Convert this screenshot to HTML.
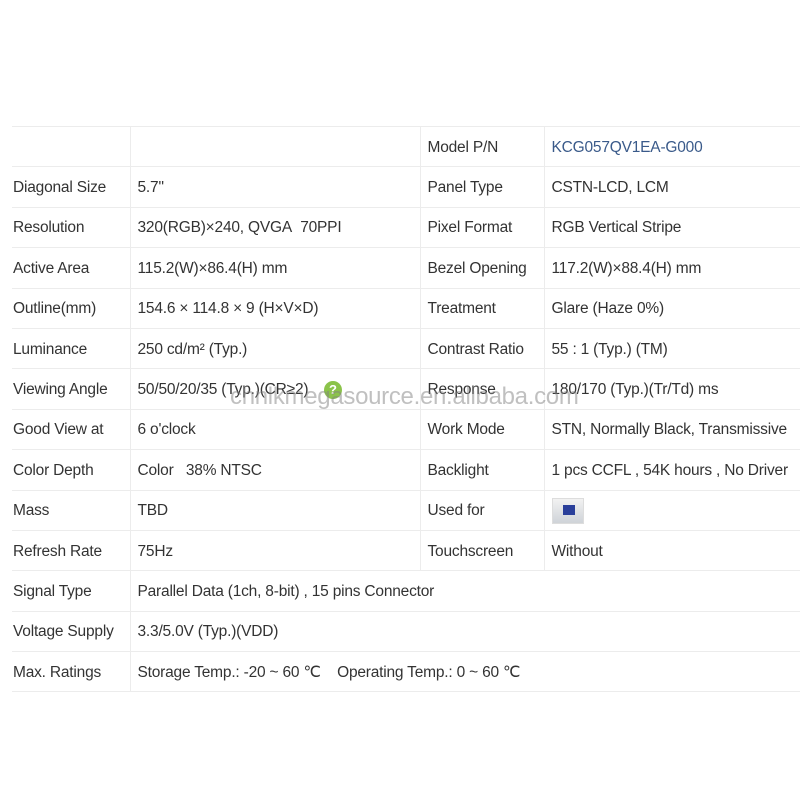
<!DOCTYPE html>
<html><head><style>
body{margin:0;background:#fff;width:800px;height:800px;overflow:hidden;position:relative;font-family:"Liberation Sans",sans-serif;}
table{position:absolute;left:12px;top:126px;border-collapse:collapse;width:788px;}
td{height:37.4px;border-top:1px solid #ececec;border-left:1px solid #ececec;padding:2px 0 0 7px;font-size:15.5px;color:#333;white-space:nowrap;letter-spacing:-0.2px;vertical-align:middle;}
td:first-child{border-left:none;padding-left:1px;}
tr:last-child td{border-bottom:1px solid #ececec;}
.b{color:#3a5a8a;}
.wm{position:absolute;left:230px;top:383px;font-size:24px;color:rgba(130,130,130,0.5);letter-spacing:-0.3px;}
.q{position:absolute;left:324px;top:381px;width:18px;height:18px;border-radius:50%;background:#8bc34a;color:#fff;font-size:13px;text-align:center;line-height:18px;font-weight:bold;}
.img{display:inline-block;width:30px;height:24px;background:linear-gradient(#f2f2f2,#cfd3d8);border:1px solid #ddd;vertical-align:middle;position:relative;}
.img:after{content:"";position:absolute;left:10px;top:6px;width:12px;height:10px;background:#2a3f9a;}
</style></head><body>
<table>
<colgroup><col style="width:118px"><col style="width:290px"><col style="width:124px"><col></colgroup>
<tr><td></td><td></td><td>Model P/N</td><td class="b">KCG057QV1EA-G000</td></tr>
<tr><td>Diagonal Size</td><td>5.7"</td><td>Panel Type</td><td>CSTN-LCD, LCM</td></tr>
<tr><td>Resolution</td><td>320(RGB)×240, QVGA&nbsp; 70PPI</td><td>Pixel Format</td><td>RGB Vertical Stripe</td></tr>
<tr><td>Active Area</td><td>115.2(W)×86.4(H) mm</td><td>Bezel Opening</td><td>117.2(W)×88.4(H) mm</td></tr>
<tr><td>Outline(mm)</td><td>154.6 × 114.8 × 9 (H×V×D)</td><td>Treatment</td><td>Glare (Haze 0%)</td></tr>
<tr><td>Luminance</td><td>250 cd/m² (Typ.)</td><td>Contrast Ratio</td><td>55 : 1 (Typ.) (TM)</td></tr>
<tr><td>Viewing Angle</td><td>50/50/20/35 (Typ.)(CR≥2)</td><td>Response</td><td>180/170 (Typ.)(Tr/Td) ms</td></tr>
<tr><td>Good View at</td><td>6 o'clock</td><td>Work Mode</td><td>STN, Normally Black, Transmissive</td></tr>
<tr><td>Color Depth</td><td>Color&nbsp;&nbsp; 38% NTSC</td><td>Backlight</td><td>1 pcs CCFL , 54K hours , No Driver</td></tr>
<tr><td>Mass</td><td>TBD</td><td>Used for</td><td><span class="img"></span></td></tr>
<tr><td>Refresh Rate</td><td>75Hz</td><td>Touchscreen</td><td>Without</td></tr>
<tr><td>Signal Type</td><td colspan="3">Parallel Data (1ch, 8-bit) , 15 pins Connector</td></tr>
<tr><td>Voltage Supply</td><td colspan="3">3.3/5.0V (Typ.)(VDD)</td></tr>
<tr><td>Max. Ratings</td><td colspan="3">Storage Temp.: -20 ~ 60 ℃&nbsp;&nbsp;&nbsp; Operating Temp.: 0 ~ 60 ℃</td></tr>
</table>
<div class="q">?</div>
<div class="wm">chnlkmegasource.en.alibaba.com</div>
</body></html>
